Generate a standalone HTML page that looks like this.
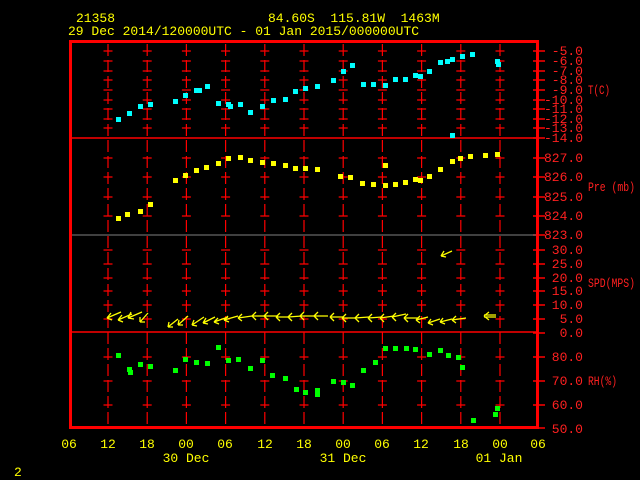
<!DOCTYPE html>
<html><head><meta charset="utf-8"><style>
html,body{margin:0;padding:0;background:#000;width:640px;height:480px;overflow:hidden}
svg{display:block}
text{font-family:"Liberation Mono",monospace;font-size:13px}
.y{fill:#ffff00}.r{fill:#ff2020}
.s{font-size:10px}
.t{font-size:10px}
</style></head><body>
<svg width="640" height="480" viewBox="0 0 640 480" xmlns="http://www.w3.org/2000/svg">
<rect width="640" height="480" fill="#000"/>
<text x="76" y="22" class="y">21358</text>
<text x="268" y="22" class="y" xml:space="preserve">84.60S  115.81W  1463M</text>
<text x="68" y="35" class="y">29 Dec 2014/120000UTC - 01 Jan 2015/000000UTC</text>

<g stroke="#ff0000" stroke-width="1.2" fill="none">
<g stroke-dasharray="12 4">
<line x1="108" y1="44" x2="108" y2="424"/><line x1="147.2" y1="44" x2="147.2" y2="424"/>
<line x1="186.4" y1="44" x2="186.4" y2="424"/><line x1="225.6" y1="44" x2="225.6" y2="424"/>
<line x1="264.8" y1="44" x2="264.8" y2="424"/><line x1="304" y1="44" x2="304" y2="424"/>
<line x1="343.2" y1="44" x2="343.2" y2="424"/><line x1="382.4" y1="44" x2="382.4" y2="424"/>
<line x1="421.6" y1="44" x2="421.6" y2="424"/><line x1="460.8" y1="44" x2="460.8" y2="424"/>
<line x1="500" y1="44" x2="500" y2="424"/>
</g>
<g stroke-dasharray="9 30.2">
<line x1="103.5" x2="510" y1="51" y2="51"/><line x1="103.5" x2="510" y1="61" y2="61"/>
<line x1="103.5" x2="510" y1="71" y2="71"/><line x1="103.5" x2="510" y1="80" y2="80"/>
<line x1="103.5" x2="510" y1="90" y2="90"/><line x1="103.5" x2="510" y1="100" y2="100"/>
<line x1="103.5" x2="510" y1="109" y2="109"/><line x1="103.5" x2="510" y1="119" y2="119"/>
<line x1="103.5" x2="510" y1="128" y2="128"/>
<line x1="103.5" x2="510" y1="158" y2="158"/><line x1="103.5" x2="510" y1="177" y2="177"/>
<line x1="103.5" x2="510" y1="197" y2="197"/><line x1="103.5" x2="510" y1="216" y2="216"/>
<line x1="103.5" x2="510" y1="250" y2="250"/><line x1="103.5" x2="510" y1="264" y2="264"/>
<line x1="103.5" x2="510" y1="278" y2="278"/><line x1="103.5" x2="510" y1="291" y2="291"/>
<line x1="103.5" x2="510" y1="305" y2="305"/><line x1="103.5" x2="510" y1="319" y2="319"/>
<line x1="103.5" x2="510" y1="357" y2="357"/><line x1="103.5" x2="510" y1="381" y2="381"/>
<line x1="103.5" x2="510" y1="405" y2="405"/>
</g>
<g stroke-width="1.5">
<path d="M533 51h12M533 61h12M533 71h12M533 80h12M533 90h12M533 100h12M533 109h12M533 119h12M533 128h12M533 138h12
M533 158h12M533 177h12M533 197h12M533 216h12M533 235h12
M533 250h12M533 264h12M533 278h12M533 291h12M533 305h12M533 319h12M533 333h12
M533 357h12M533 381h12M533 405h12M533 428h12"/>
</g>
<line x1="70" y1="138" x2="538" y2="138" stroke-width="1.5"/>
<line x1="70" y1="332" x2="538" y2="332" stroke-width="1.5"/>
<line x1="70" y1="235" x2="538" y2="235" stroke="#808080" stroke-width="1"/>
<rect x="70.5" y="41.5" width="467" height="386" stroke-width="3"/>
</g>

<g class="r s" text-anchor="end">
<text x="583" y="55">-5.0</text><text x="583" y="65">-6.0</text><text x="583" y="75">-7.0</text>
<text x="583" y="84">-8.0</text><text x="583" y="94">-9.0</text><text x="583" y="104">-10.0</text>
<text x="583" y="113">-11.0</text><text x="583" y="123">-12.0</text><text x="583" y="132">-13.0</text>
<text x="583" y="142">-14.0</text>
<text x="583" y="162">827.0</text><text x="583" y="181">826.0</text><text x="583" y="201">825.0</text>
<text x="583" y="220">824.0</text><text x="583" y="239">823.0</text>
<text x="583" y="254">30.0</text><text x="583" y="268">25.0</text><text x="583" y="282">20.0</text>
<text x="583" y="295">15.0</text><text x="583" y="309">10.0</text><text x="583" y="323">5.0</text>
<text x="583" y="337">0.0</text>
<text x="583" y="361">80.0</text><text x="583" y="385">70.0</text><text x="583" y="409">60.0</text>
<text x="583" y="433">50.0</text>
</g>
<g class="r t">
<text x="588" y="94" textLength="22" lengthAdjust="spacingAndGlyphs">T(C)</text>
<text x="588" y="191" textLength="47" lengthAdjust="spacingAndGlyphs">Pre (mb)</text>
<text x="588" y="287" textLength="47" lengthAdjust="spacingAndGlyphs">SPD(MPS)</text>
<text x="588" y="385" textLength="29" lengthAdjust="spacingAndGlyphs">RH(%)</text>
</g>

<g class="y" text-anchor="middle">
<text x="69" y="448">06</text><text x="108" y="448">12</text><text x="147" y="448">18</text>
<text x="186" y="448">00</text><text x="225" y="448">06</text><text x="265" y="448">12</text>
<text x="304" y="448">18</text><text x="343" y="448">00</text><text x="382" y="448">06</text>
<text x="421" y="448">12</text><text x="461" y="448">18</text><text x="500" y="448">00</text>
<text x="538" y="448">06</text>
<text x="186" y="462">30 Dec</text><text x="343" y="462">31 Dec</text><text x="499" y="462">01 Jan</text>
</g>
<text x="14" y="476" class="y">2</text>

<g fill="#00ffff">
<rect x="116" y="117" width="5" height="5"/><rect x="127" y="111" width="5" height="5"/>
<rect x="138" y="104" width="5" height="5"/><rect x="148" y="102" width="5" height="5"/>
<rect x="173" y="99" width="5" height="5"/><rect x="183" y="93" width="5" height="5"/>
<rect x="194" y="88" width="5" height="5"/><rect x="197" y="88" width="5" height="5"/>
<rect x="205" y="84" width="5" height="5"/><rect x="216" y="101" width="5" height="5"/>
<rect x="226" y="102" width="5" height="5"/><rect x="228" y="104" width="5" height="5"/>
<rect x="238" y="102" width="5" height="5"/><rect x="248" y="110" width="5" height="5"/>
<rect x="260" y="104" width="5" height="5"/><rect x="271" y="98" width="5" height="5"/>
<rect x="283" y="97" width="5" height="5"/><rect x="293" y="89" width="5" height="5"/>
<rect x="303" y="86" width="5" height="5"/><rect x="315" y="84" width="5" height="5"/>
<rect x="331" y="78" width="5" height="5"/><rect x="341" y="69" width="5" height="5"/>
<rect x="350" y="63" width="5" height="5"/><rect x="361" y="82" width="5" height="5"/>
<rect x="371" y="82" width="5" height="5"/><rect x="383" y="83" width="5" height="5"/>
<rect x="393" y="77" width="5" height="5"/><rect x="403" y="77" width="5" height="5"/>
<rect x="413" y="73" width="5" height="5"/><rect x="418" y="74" width="5" height="5"/>
<rect x="427" y="69" width="5" height="5"/><rect x="438" y="60" width="5" height="5"/>
<rect x="445" y="59" width="5" height="5"/><rect x="450" y="57" width="5" height="5"/>
<rect x="460" y="54" width="5" height="5"/><rect x="470" y="52" width="5" height="5"/>
<rect x="450" y="133" width="5" height="5"/><rect x="495" y="59" width="5" height="5"/>
<rect x="496" y="62" width="5" height="5"/>
</g>

<g fill="#ffff00">
<rect x="116" y="216" width="5" height="5"/><rect x="125" y="212" width="5" height="5"/>
<rect x="138" y="209" width="5" height="5"/><rect x="148" y="202" width="5" height="5"/>
<rect x="173" y="178" width="5" height="5"/><rect x="183" y="173" width="5" height="5"/>
<rect x="194" y="168" width="5" height="5"/><rect x="204" y="165" width="5" height="5"/>
<rect x="216" y="161" width="5" height="5"/><rect x="226" y="156" width="5" height="5"/>
<rect x="238" y="155" width="5" height="5"/><rect x="248" y="158" width="5" height="5"/>
<rect x="260" y="160" width="5" height="5"/><rect x="271" y="161" width="5" height="5"/>
<rect x="283" y="163" width="5" height="5"/><rect x="293" y="166" width="5" height="5"/>
<rect x="303" y="166" width="5" height="5"/><rect x="315" y="167" width="5" height="5"/>
<rect x="338" y="174" width="5" height="5"/><rect x="348" y="175" width="5" height="5"/>
<rect x="360" y="181" width="5" height="5"/><rect x="371" y="182" width="5" height="5"/>
<rect x="383" y="183" width="5" height="5"/><rect x="383" y="163" width="5" height="5"/>
<rect x="393" y="182" width="5" height="5"/><rect x="403" y="180" width="5" height="5"/>
<rect x="413" y="177" width="5" height="5"/><rect x="418" y="178" width="5" height="5"/>
<rect x="427" y="174" width="5" height="5"/><rect x="438" y="167" width="5" height="5"/>
<rect x="450" y="159" width="5" height="5"/><rect x="458" y="156" width="5" height="5"/>
<rect x="468" y="154" width="5" height="5"/><rect x="483" y="153" width="5" height="5"/>
<rect x="495" y="152" width="5" height="5"/>
</g>

<g stroke="#ffff00" stroke-width="1.3" fill="none">
<path d="M107 318 l14 -6 M107 318 l4 -5 M107 318 l5 2"/>
<path d="M118 320 l14 -6 M118 320 l4 -5 M118 320 l5 2"/>
<path d="M128 318 l14 -6 M128 318 l3 -6 M128 318 l6 1"/>
<path d="M140 322 l8 -9 M140 322 l0 -5 M140 322 l5 0"/>
<path d="M168 327 l10 -8 M168 327 l1 -5 M168 327 l5 0"/>
<path d="M178 325 l10 -9 M178 325 l1 -5 M178 325 l5 0"/>
<path d="M192 325 l12 -8 M192 325 l2 -5 M192 325 l5 1"/>
<path d="M203 323 l12 -6 M203 323 l3 -5 M203 323 l5 1"/>
<path d="M214 322 l14 -5 M214 322 l4 -4 M214 322 l5 2"/>
<path d="M224 320 l14 -4 M224 320 l4 -4 M224 320 l5 2"/>
<path d="M238 318 l14 -2 M238 318 l4 -4 M238 318 l4 3"/>
<path d="M252 316 l14 0 M252 316 l4 -4 M252 316 l4 4"/>
<path d="M264 316 l14 0 M264 316 l4 -4 M264 316 l4 4"/>
<path d="M276 317 l14 0 M276 317 l4 -4 M276 317 l4 4"/>
<path d="M288 317 l14 -1 M288 317 l4 -4 M288 317 l4 4"/>
<path d="M300 316 l14 0 M300 316 l4 -4 M300 316 l4 4"/>
<path d="M314 316 l14 0 M314 316 l4 -4 M314 316 l4 4"/>
<path d="M330 317 l14 0 M330 317 l4 -4 M330 317 l4 4"/>
<path d="M342 318 l14 0 M342 318 l4 -4 M342 318 l4 4"/>
<path d="M355 318 l14 -1 M355 318 l4 -4 M355 318 l4 4"/>
<path d="M368 318 l14 -1 M368 318 l4 -4 M368 318 l4 4"/>
<path d="M380 318 l14 -2 M380 318 l4 -4 M380 318 l4 4"/>
<path d="M392 317 l14 -3 M392 317 l4 -4 M392 317 l4 4"/>
<path d="M404 318 l14 0 M404 318 l4 -4 M404 318 l4 4"/>
<path d="M416 320 l12 -3 M416 320 l4 -4 M416 320 l4 3"/>
<path d="M428 323 l12 -4 M428 323 l3 -4 M428 323 l5 2"/>
<path d="M440 322 l12 -3 M440 322 l3 -4 M440 322 l5 2"/>
<path d="M452 320 l14 -2 M452 320 l4 -4 M452 320 l4 3"/>
<path d="M484 315 l12 0 M484 317 l12 0 M484 316 l5 -4 M484 316 l5 4"/>
<path d="M441 256 l11 -5 M441 256 l3 -5 M441 256 l5 1"/>
</g>

<g fill="#00ff00">
<rect x="116" y="353" width="5" height="5"/><rect x="127" y="367" width="5" height="5"/>
<rect x="128" y="370" width="5" height="5"/><rect x="138" y="362" width="5" height="5"/>
<rect x="148" y="364" width="5" height="5"/><rect x="173" y="368" width="5" height="5"/>
<rect x="183" y="357" width="5" height="5"/><rect x="194" y="360" width="5" height="5"/>
<rect x="205" y="361" width="5" height="5"/><rect x="216" y="345" width="5" height="5"/>
<rect x="226" y="358" width="5" height="5"/><rect x="236" y="357" width="5" height="5"/>
<rect x="248" y="366" width="5" height="5"/><rect x="260" y="358" width="5" height="5"/>
<rect x="270" y="373" width="5" height="5"/><rect x="283" y="376" width="5" height="5"/>
<rect x="294" y="387" width="5" height="5"/><rect x="303" y="390" width="5" height="5"/>
<rect x="315" y="392" width="5" height="5"/><rect x="315" y="388" width="5" height="5"/>
<rect x="331" y="379" width="5" height="5"/><rect x="341" y="380" width="5" height="5"/>
<rect x="350" y="383" width="5" height="5"/><rect x="361" y="368" width="5" height="5"/>
<rect x="373" y="360" width="5" height="5"/><rect x="383" y="346" width="5" height="5"/>
<rect x="393" y="346" width="5" height="5"/><rect x="404" y="346" width="5" height="5"/>
<rect x="413" y="347" width="5" height="5"/><rect x="427" y="352" width="5" height="5"/>
<rect x="438" y="348" width="5" height="5"/><rect x="446" y="353" width="5" height="5"/>
<rect x="456" y="355" width="5" height="5"/><rect x="460" y="365" width="5" height="5"/>
<rect x="471" y="418" width="5" height="5"/><rect x="493" y="412" width="5" height="5"/>
<rect x="495" y="406" width="5" height="5"/>
</g>
</svg>
</body></html>
